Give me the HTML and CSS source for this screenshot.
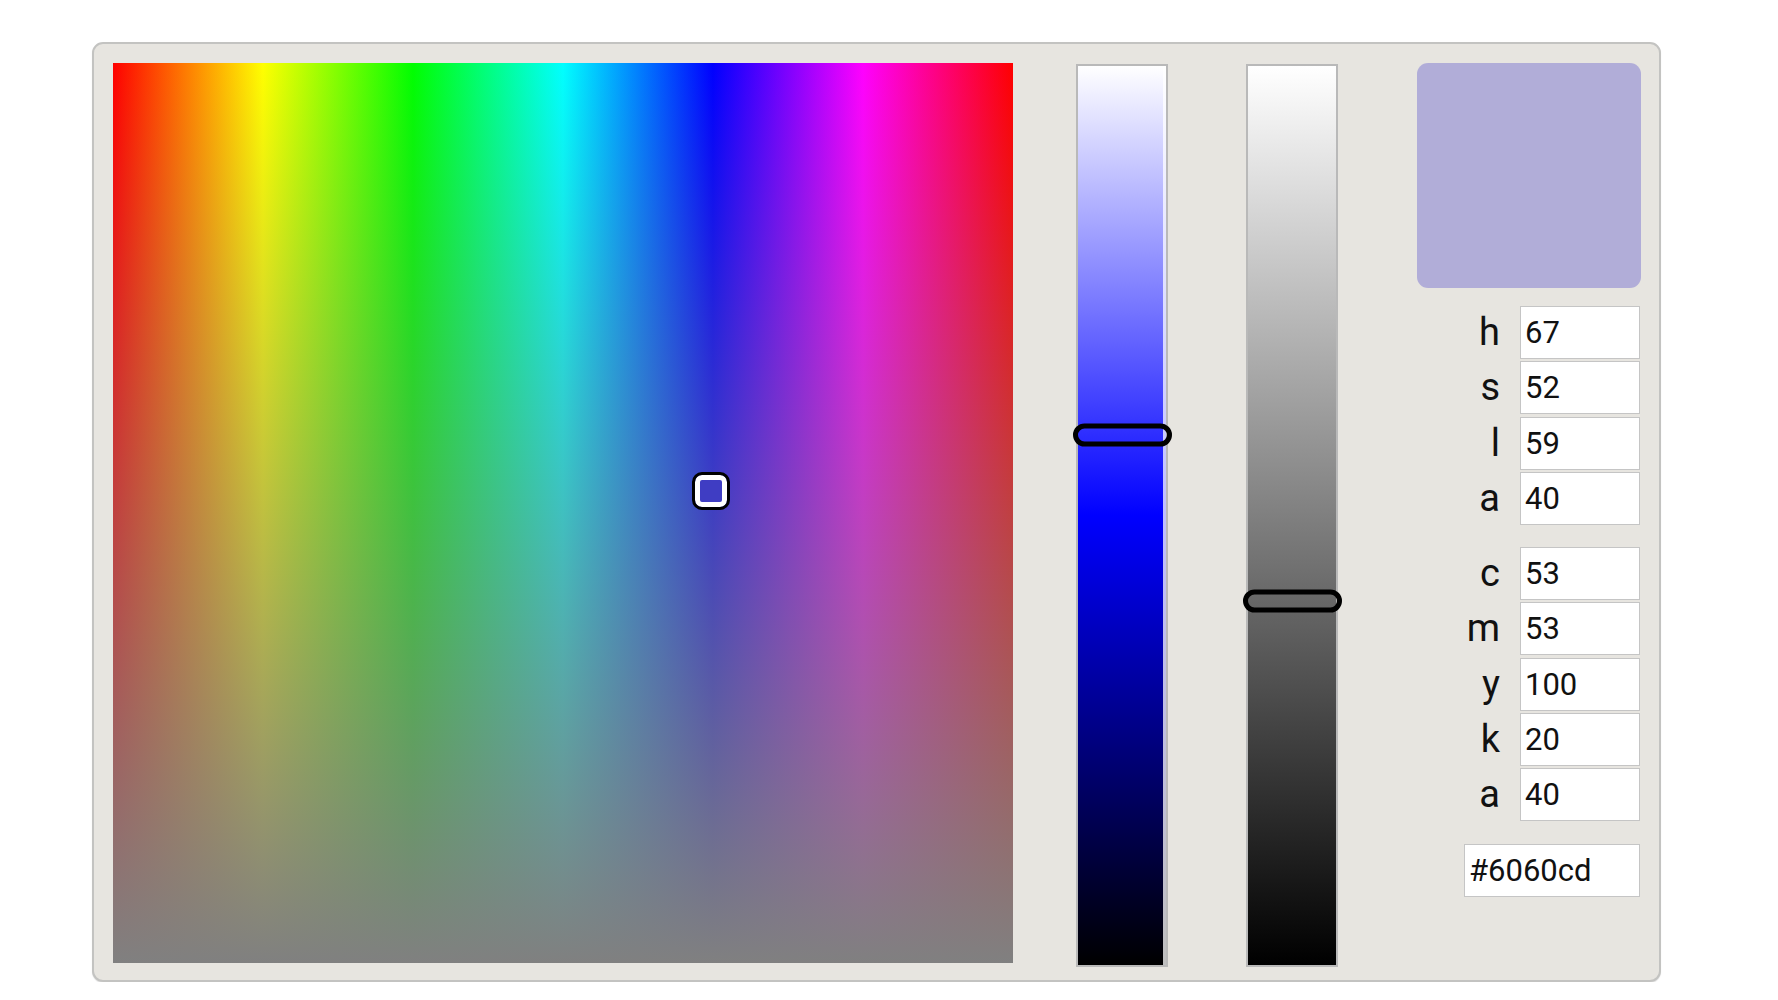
FILE: index.html
```html
<!DOCTYPE html>
<html lang="en">
<head>
<meta charset="utf-8">
<title>Color picker</title>
<link rel="stylesheet" href="styles.css">
</head>
<body>
<div class="picker">
  <div class="field">
    <div class="marker" style="left:66.4%;top:47.5%"></div>
  </div>
  <div class="slider slider-light">
    <div class="handle" style="top:41%"></div>
  </div>
  <div class="slider slider-alpha">
    <div class="handle" style="top:59.5%"></div>
  </div>
  <div class="side">
    <div class="preview"></div>
    <div class="group group-hsl">
      <label class="lbl">h</label><input class="num" value="67">
      <label class="lbl">s</label><input class="num" value="52">
      <label class="lbl">l</label><input class="num" value="59">
      <label class="lbl">a</label><input class="num" value="40">
    </div>
    <div class="group group-cmyk">
      <label class="lbl">c</label><input class="num" value="53">
      <label class="lbl">m</label><input class="num" value="53">
      <label class="lbl">y</label><input class="num" value="100">
      <label class="lbl">k</label><input class="num" value="20">
      <label class="lbl">a</label><input class="num" value="40">
    </div>
    <input class="hex" value="#6060cd">
  </div>
</div>
</body>
</html>
```

FILE: styles.css
```css
html, body {
  margin: 0;
  padding: 0;
  background: #ffffff;
  font-family: Roboto, "Noto Sans", "Liberation Sans", sans-serif;
  color: #111111;
}

.picker {
  box-sizing: border-box;
  display: flex;
  align-items: flex-start;
  width: 1569px;
  height: 940px;
  margin: 42px 0 0 92px;
  padding: 19px 18px 13px 19px;
  background: #e7e5e0;
  border: 2px solid #c3c3c1;
  border-radius: 11px;
  box-shadow: 0 1px 1px rgba(0, 0, 0, 0.12);
}

.field {
  position: relative;
  flex: none;
  width: 900px;
  height: 900px;
  margin-right: 63px;
  background:
    linear-gradient(to bottom, rgba(128, 128, 128, 0) 0%, #808080 100%),
    linear-gradient(to right, #ff0000 0%, #ffff00 16.67%, #00ff00 33.33%, #00ffff 50%, #0000ff 66.67%, #ff00ff 83.33%, #ff0000 100%);
}

.marker {
  position: absolute;
  box-sizing: border-box;
  width: 38px;
  height: 38px;
  transform: translate(-50%, -50%);
  border: 3px solid #000000;
  border-radius: 10px;
  background: #3f3dc3;
  box-shadow: inset 0 0 0 5px #ffffff;
}

.slider {
  position: relative;
  flex: none;
  box-sizing: border-box;
  width: 92px;
  height: 903px;
  margin-top: 1px;
  border: 2px solid #b9b9b9;
}

.slider-light {
  margin-right: 78px;
  background: linear-gradient(to bottom, #ffffff 0%, #0000ff 50%, #000000 100%);
  box-shadow: inset -3px 0 0 rgba(255, 255, 255, 0.75);
}

.slider-alpha {
  margin-right: 79px;
  background: linear-gradient(to bottom, #ffffff 0%, #000000 100%);
}

.handle {
  position: absolute;
  box-sizing: border-box;
  left: -5.5px;
  width: 99px;
  height: 23px;
  transform: translateY(-50%);
  border: 5px solid #000000;
  border-radius: 12px;
}

.side {
  flex: none;
  width: 224px;
  display: flex;
  flex-direction: column;
}

.preview {
  width: 224px;
  height: 225px;
  border-radius: 11px;
  background: rgba(98, 90, 205, 0.4);
}

.group {
  display: grid;
  grid-template-columns: 83px 120px;
  grid-auto-rows: 53px;
  column-gap: 20px;
  row-gap: 2.33px;
}

.group-hsl {
  margin-top: 18px;
}

.group-cmyk {
  margin-top: 22px;
}

.lbl {
  font-size: 38px;
  line-height: 53px;
  text-align: right;
  color: #111111;
}

.num,
.hex {
  box-sizing: border-box;
  height: 53px;
  margin: 0;
  padding: 0 0 0 4px;
  border: 1px solid #c5c5c5;
  border-radius: 0;
  background: #ffffff;
  font-family: Roboto, "Noto Sans", "Liberation Sans", sans-serif;
  font-size: 31px;
  color: #111111;
  outline: none;
}

.num {
  width: 120px;
}

.hex {
  width: 176px;
  margin-top: 23px;
  margin-left: 47px;
}
```
